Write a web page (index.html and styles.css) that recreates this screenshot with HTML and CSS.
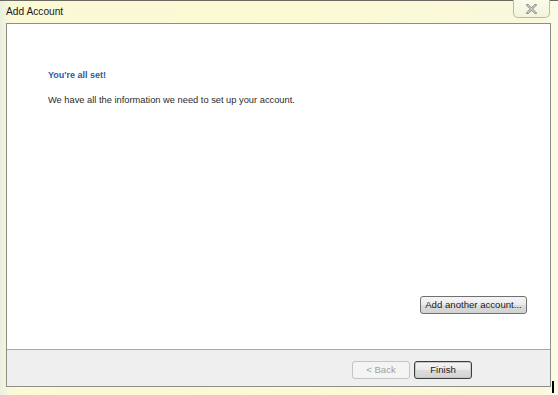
FILE: index.html
```html
<!DOCTYPE html>
<html>
<head>
<meta charset="utf-8">
<link rel="stylesheet" href="styles.css">
</head>
<body>
<div class="window">
  <div class="titlebar">
    <span class="title">Add Account</span>
    <div class="close">
      <svg width="11" height="10" viewBox="0 0 11 10">
        <path d="M1.5 1 L9.5 9 M9.5 1 L1.5 9" stroke="#8a8a86" stroke-width="2.4" stroke-linecap="square"/>
        <path d="M1.5 1 L9.5 9 M9.5 1 L1.5 9" stroke="#f4f4ee" stroke-width="0.9"/>
      </svg>
    </div>
  </div>
  <div class="client">
    <div class="content">
      <h1 class="heading">You're all set!</h1>
      <p class="message">We have all the information we need to set up your account.</p>
      <div class="spacer"></div>
      <div class="another-row">
        <button class="btn btn-another">Add another account...</button>
      </div>
    </div>
    <div class="footer">
      <button class="btn btn-nav" disabled>&lt; Back</button>
      <button class="btn btn-nav btn-finish">Finish</button>
    </div>
  </div>
  <div class="grip"></div>
</div>
</body>
</html>
```
FILE: styles.css
```css
* { box-sizing: border-box; }
html, body { margin: 0; padding: 0; }
body {
  width: 558px;
  height: 395px;
  overflow: hidden;
  font-family: "Liberation Sans", Arial, sans-serif;
  background: #fdfcf0;
}
.window {
  position: relative;
  width: 558px;
  height: 395px;
  display: flex;
  flex-direction: column;
  border-top: 1px solid #6a6a60;
  background: linear-gradient(90deg, #e9f0e2 0px, #fbf9d6 10px, #fcfad4 300px, #f9f8dc 540px, #fdfce8 558px);
}
.titlebar {
  height: 22px;
  display: flex;
  align-items: flex-start;
  padding-left: 6px;
  padding-right: 8px;
}
.title {
  font-size: 10.2px;
  line-height: 14px;
  margin-top: 4px;
  color: #1a1a1a;
}
.close {
  margin-left: auto;
  margin-top: -1px;
  width: 37px;
  height: 18px;
  border: 1px solid #b9b8a4;
  border-top: none;
  border-radius: 0 0 5px 5px;
  background: linear-gradient(#fbfbea, #f3f2dc);
  display: flex;
  align-items: center;
  justify-content: center;
}
.client {
  margin-left: 6px;
  margin-right: 7px;
  height: 364px;
  border: 1px solid #8e8e86;
  display: flex;
  flex-direction: column;
  background: #fff;
}
.content {
  flex: 1;
  display: flex;
  flex-direction: column;
  padding: 44px 23px 35px 41px;
}
.heading {
  margin: 0;
  font-size: 9px;
  font-weight: 700;
  line-height: 14px;
  color: #2a5ba3;
}
.message {
  margin: 11px 0 0;
  font-size: 9.3px;
  line-height: 14px;
  color: #2b2b2b;
}
.spacer { flex: 1; }
.another-row {
  display: flex;
  justify-content: flex-end;
}
.btn {
  font-family: "Liberation Sans", Arial, sans-serif;
  font-size: 9.6px;
  line-height: 12px;
  height: 18px;
  padding: 0 4px;
  white-space: nowrap;
  border: 1px solid #707070;
  border-radius: 3px;
  background: linear-gradient(#f5f5f5 0%, #eaeaea 50%, #dcdcdc 51%, #d2d2d2 100%);
  color: #1a1a1a;
}
.btn-another { width: 107px; }
.footer {
  height: 37px;
  border-top: 1px solid #a8a8a8;
  background: #efefef;
  display: flex;
  justify-content: flex-end;
  align-items: flex-start;
  gap: 4px;
  padding-top: 11px;
  padding-right: 78px;
}
.btn-nav { width: 58px; }
.btn-nav:disabled {
  color: #a0a0a0;
  border-color: #c4c4c4;
  background: #f4f4f4;
}
.btn-finish {
  border-color: #3c3c3c;
  box-shadow: inset 0 0 0 1px #c8c8c8;
}
.grip {
  position: absolute;
  right: 4px;
  bottom: 2px;
  width: 2px;
  height: 12px;
  background: #000;
}
```
